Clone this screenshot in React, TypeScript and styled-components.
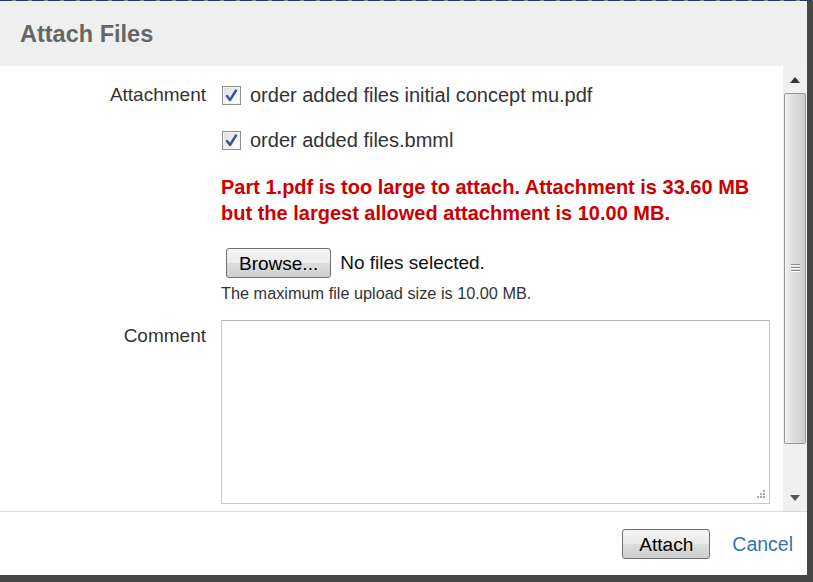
import React from "react";
import styled, { createGlobalStyle } from "styled-components";

const GlobalStyle = createGlobalStyle`
  html, body { margin: 0; padding: 0; }
  body {
    background: #464646;
    font-family: "Liberation Sans", Arial, sans-serif;
    color: #333;
    overflow: hidden;
  }
`;

const Page = styled.div`
  width: 813px;
  height: 582px;
  display: flex;
  flex-direction: column;
  background: #474747;
`;

const TopStrip = styled.div`
  height: 1px;
  width: 100%;
  background: repeating-linear-gradient(90deg, #1f3a5c 0 12px, #8a8a8a 12px 16px);
`;

const Dialog = styled.div`
  width: 807px;
  height: 574px;
  display: flex;
  flex-direction: column;
  background: #fff;
`;

const Header = styled.div`
  height: 65px;
  flex: none;
  display: flex;
  align-items: center;
  padding-left: 20px;
  padding-top: 2px;
  box-sizing: border-box;
  background: #efefef;
`;

const Title = styled.h2`
  margin: 0;
  font-size: 23.5px;
  font-weight: bold;
  color: #666;
  line-height: 1;
`;

const BodyRow = styled.div`
  height: 445px;
  flex: none;
  display: flex;
  border-bottom: 1px solid #dcdcdc;
`;

const Content = styled.div`
  flex: 1;
  display: grid;
  grid-template-columns: 206px 1fr;
  column-gap: 15px;
  row-gap: 18px;
  align-content: start;
  padding-top: 16px;
  padding-right: 13px;
`;

const Label = styled.div<{ $top: number }>`
  text-align: right;
  font-size: 19px;
  color: #333;
  line-height: 26px;
  padding-top: ${(p) => p.$top}px;
`;

const Stack = styled.div`
  display: flex;
  flex-direction: column;
`;

const CheckRow = styled.label<{ $mb: number }>`
  display: flex;
  align-items: center;
  gap: 9px;
  height: 26px;
  margin-bottom: ${(p) => p.$mb}px;
  font-size: 20px;
  color: #333;
`;

const Box = styled.span`
  width: 17px;
  height: 17px;
  flex: none;
  margin-left: 1px;
  border: 1px solid #8e8f8f;
  background: linear-gradient(135deg, #dcdcdc 0%, #f7f7f7 70%, #ffffff 100%);
  box-shadow: inset 0 0 0 1px #f4f4f4;
  display: flex;
  align-items: center;
  justify-content: center;
`;

const ErrorText = styled.div`
  color: #cc0000;
  font-weight: bold;
  font-size: 20px;
  line-height: 26px;
  margin-bottom: 22px;
`;

const FileRow = styled.div`
  display: flex;
  align-items: center;
  gap: 9px;
  padding-left: 5px;
  font-size: 19px;
  color: #111;
`;

const Button = styled.button<{ $w?: number }>`
  font-family: "Liberation Sans", Arial, sans-serif;
  font-size: 19px;
  color: #000;
  height: 30px;
  ${(p) => (p.$w ? `width: ${p.$w}px;` : "")}
  padding: 0 12px;
  border: 1px solid #707070;
  border-radius: 3px;
  background: linear-gradient(#f3f3f3 0%, #ebebeb 50%, #dddddd 51%, #cfcfcf 100%);
  line-height: 1;
  cursor: default;
`;

const Help = styled.div`
  font-size: 16.3px;
  line-height: 18px;
  color: #333;
  margin-top: 6px;
`;

const TextArea = styled.div`
  position: relative;
  height: 182px;
  border: 1px solid #c8c8c8;
  border-top-color: #b4b4b4;
  background: #fff;
`;

const Grip = styled.svg`
  position: absolute;
  right: 3px;
  bottom: 3px;
`;

const Scrollbar = styled.div`
  width: 24px;
  flex: none;
  display: flex;
  flex-direction: column;
  background: #f0f0f0;
`;

const Arrow = styled.div`
  height: 27px;
  flex: none;
  display: flex;
  align-items: center;
  justify-content: center;
`;

const Track = styled.div`
  flex: 1;
  display: flex;
  flex-direction: column;
  padding: 0 1px;
`;

const Thumb = styled.div`
  height: 349px;
  border: 1px solid #969696;
  border-radius: 2px;
  background: linear-gradient(90deg, #f4f4f4 0%, #e3e3e3 25%, #d8d8d8 60%, #cdcdcd 100%);
  display: flex;
  align-items: center;
  justify-content: center;
`;

const Footer = styled.div`
  flex: 1;
  display: flex;
  align-items: center;
  justify-content: flex-end;
  gap: 22px;
  padding-right: 14px;
  padding-top: 1px;
`;

const LinkButton = styled.a`
  font-size: 19.5px;
  color: #3572b0;
  text-decoration: none;
`;

const Check = () => (
  <Box>
    <svg width="13" height="13" viewBox="0 0 13 13">
      <path d="M2 7 L5 11 L11 1.5" fill="none" stroke="#3d5294" strokeWidth="2.4" strokeLinejoin="round" strokeLinecap="round" />
    </svg>
  </Box>
);

export default function App() {
  return (
    <Page>
      <GlobalStyle />
      <TopStrip />
      <Dialog>
        <Header>
          <Title>Attach Files</Title>
        </Header>
        <BodyRow>
          <Content>
            <Label $top={0}>Attachment</Label>
            <Stack>
              <CheckRow $mb={19}>
                <Check />
                order added files initial concept mu.pdf
              </CheckRow>
              <CheckRow $mb={21}>
                <Check />
                order added files.bmml
              </CheckRow>
              <ErrorText>
                Part 1.pdf is too large to attach. Attachment is 33.60 MB
                <br />
                but the largest allowed attachment is 10.00 MB.
              </ErrorText>
              <FileRow>
                <Button>Browse...</Button>
                No files selected.
              </FileRow>
              <Help>The maximum file upload size is 10.00 MB.</Help>
            </Stack>
            <Label $top={3}>Comment</Label>
            <TextArea>
              <Grip width="10" height="10" viewBox="0 0 10 10">
                <g fill="#a8a8a8">
                  <rect x="7" y="0" width="2" height="2" />
                  <rect x="4" y="3" width="2" height="2" />
                  <rect x="7" y="3" width="2" height="2" />
                  <rect x="1" y="6" width="2" height="2" />
                  <rect x="4" y="6" width="2" height="2" />
                  <rect x="7" y="6" width="2" height="2" />
                </g>
              </Grip>
            </TextArea>
          </Content>
          <Scrollbar>
            <Arrow>
              <svg width="10" height="6" viewBox="0 0 10 6">
                <path d="M0 6 L5 0 L10 6 Z" fill="#333" />
              </svg>
            </Arrow>
            <Track>
              <Thumb>
                <svg width="9" height="9" viewBox="0 0 9 9">
                  <g fill="#8a8a8a">
                    <rect x="0" y="0" width="9" height="1" />
                    <rect x="0" y="3" width="9" height="1" />
                    <rect x="0" y="6" width="9" height="1" />
                  </g>
                  <g fill="#fafafa">
                    <rect x="0" y="1" width="9" height="1" />
                    <rect x="0" y="4" width="9" height="1" />
                    <rect x="0" y="7" width="9" height="1" />
                  </g>
                </svg>
              </Thumb>
            </Track>
            <Arrow>
              <svg width="10" height="6" viewBox="0 0 10 6">
                <path d="M0 0 L5 6 L10 0 Z" fill="#555" />
              </svg>
            </Arrow>
          </Scrollbar>
        </BodyRow>
        <Footer>
          <Button $w={88}>Attach</Button>
          <LinkButton href="#">Cancel</LinkButton>
        </Footer>
      </Dialog>
    </Page>
  );
}
